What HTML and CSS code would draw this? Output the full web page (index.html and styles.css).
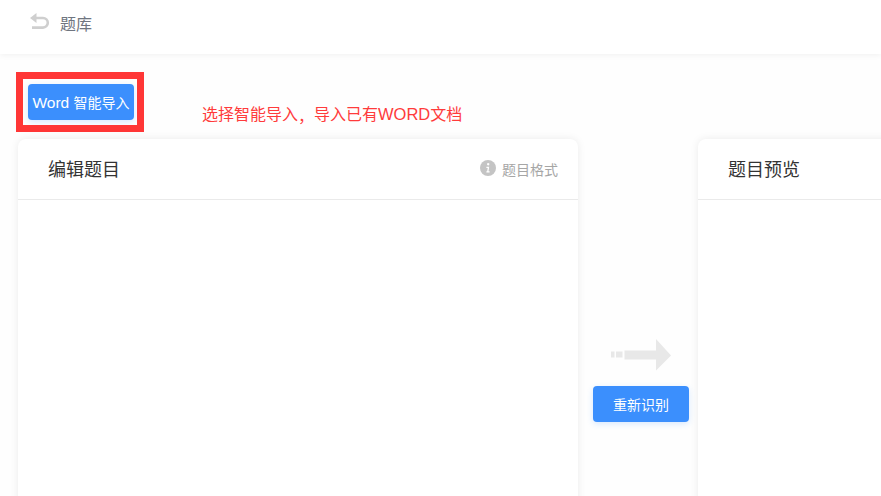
FILE: index.html
```html
<!DOCTYPE html>
<html lang="zh">
<head>
<meta charset="utf-8">
<title>题库</title>
<link rel="stylesheet" href="styles.css">
</head>
<body>
<header class="topbar">
  <svg class="back" width="22" height="18" viewBox="0 0 22 18" fill="none">
    <path d="M4 5 H14 A4.8 4.8 0 0 1 14 14.6 H3" stroke="#cfcfcf" stroke-width="2.6"/>
    <path d="M7.5 0 L1 5 L7.5 10 Z" fill="#cfcfcf"/>
  </svg>
  <span class="crumb">题库</span>
</header>
<main class="content">
  <div class="toolbar">
    <button class="btn btn-word">Word <span class="cjk14">智能导入</span></button>
    <div class="highlight"></div>
    <p class="note">选择智能导入<span class="comma">，</span>导入已有<span class="latin">WORD</span>文档</p>
  </div>
  <div class="columns">
    <section class="card">
      <div class="card-head">
        <h2 class="card-title">编辑题目</h2>
        <div class="format">
          <svg class="info" width="16" height="16" viewBox="0 0 16 16">
            <circle cx="8" cy="8" r="8" fill="#c4c4c4"/>
            <path d="M8.2 3 a1.2 1.2 0 1 1 -.01 0 Z M6.4 6.8 H9.2 L8.5 11.2 H9.6 V12.5 H6.4 V11.2 H7.2 L7.7 8 H6.4 Z" fill="#fff"/>
          </svg>
          <span>题目格式</span>
        </div>
      </div>
    </section>
    <div class="middle">
      <svg class="arrow" width="60" height="32" viewBox="0 0 60 32">
        <path d="M0 12.5 H3.5 V18.5 H0 Z M5 12.5 H11.5 V18.5 H5 Z M13.5 11.5 H45 V0 L60 16.5 L45 31.5 V20.5 H13.5 Z" fill="#e8e8e8"/>
      </svg>
      <button class="btn btn-retry">重新识别</button>
    </div>
    <section class="card">
      <div class="card-head">
        <h2 class="card-title">题目预览</h2>
      </div>
    </section>
  </div>
</main>
</body>
</html>
```
FILE: styles.css
```css
* { box-sizing: border-box; }
html, body { margin: 0; height: 100%; }
body {
  width: 881px;
  height: 496px;
  overflow: hidden;
  background: #fefefe;
  font-family: "Liberation Sans", "Noto Sans CJK SC", sans-serif;
}
.topbar {
  height: 54px;
  background: #fff;
  box-shadow: 0 1px 6px rgba(0, 0, 0, .06);
  display: flex;
  align-items: flex-start;
  padding: 13px 0 0 29px;
}
.back { flex: none; }
.crumb {
  margin: 2px 0 0 9px;
  font-size: 16px;
  line-height: 20px;
  color: #6f7580;
}
.content { padding: 30px 0 0 18px; }
.toolbar { position: relative; height: 55px; }
.btn {
  display: block;
  border: 0;
  border-radius: 4px;
  background: #3b8ffd;
  color: #fff;
  font-family: inherit;
  padding: 0;
  box-shadow: 0 2px 6px rgba(59, 143, 253, .2);
}
.btn-word {
  margin-left: 10px;
  width: 106px;
  height: 36px;
  font-size: 15.5px;
  white-space: nowrap;
}
.cjk14 { font-size: 14px; }
.highlight {
  position: absolute;
  left: -2px;
  top: -12px;
  width: 128px;
  height: 60px;
  border: 7px solid #ff3636;
}
.note {
  position: absolute;
  left: 184px;
  top: 20px;
  margin: 0;
  font-size: 16px;
  line-height: 20px;
  white-space: nowrap;
  color: #ff3b3b;
}
.comma {
  font-family: "Noto Sans CJK TC", sans-serif;
  line-height: 0;
  vertical-align: -2px;
}
.latin { font-size: 16.5px; }
.columns { display: flex; align-items: flex-start; width: 1240px; }
.card {
  flex: none;
  width: 560px;
  height: 400px;
  background: #fff;
  border-radius: 8px;
  box-shadow: 0 0 8px rgba(0, 0, 0, .08);
}
.card-head {
  height: 61px;
  border-bottom: 1px solid #eaeaea;
  display: flex;
  align-items: center;
  justify-content: space-between;
  padding: 2px 20px 0 30px;
}
.card-title {
  margin: 0;
  font-size: 18px;
  font-weight: 400;
  line-height: 24px;
  color: #333;
}
.format {
  display: flex;
  align-items: center;
  gap: 6px;
  padding-bottom: 2px;
  font-size: 14px;
  color: #a6a6a6;
}
.info { margin-bottom: 2px; }
.middle {
  flex: none;
  width: 120px;
  display: flex;
  flex-direction: column;
  align-items: center;
  padding: 200px 0 0 6px;
}
.btn-retry {
  margin-top: 15px;
  width: 96px;
  height: 36px;
  font-size: 14px;
}
```
